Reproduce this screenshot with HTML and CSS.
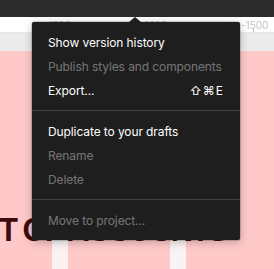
FILE: index.html
```html
<!DOCTYPE html>
<html>
<head>
<meta charset="utf-8">
<link rel="stylesheet" href="styles.css">
</head>
<body>
<div class="app">
  <div class="topbar"></div>
  <div class="ruler">
    <span class="rl rl1">-1700</span>
    <span class="rl rl2">-1600</span>
    <span class="rl rl3">-1500</span>
    <span class="tick"></span>
  </div>
  <div class="gray"></div>
  <div class="canvas">
    <div class="bar bar1"></div>
    <div class="bar bar2"></div>
    <div class="bigtext">T OF ACCOUNTS</div>
  </div>
  <div class="menu">
    <div class="caret"></div>
    <div class="item">Show version history</div>
    <div class="item dis">Publish styles and components</div>
    <div class="item"><span>Export...</span><span class="sc">⇧⌘E</span></div>
    <div class="sep"></div>
    <div class="item">Duplicate to your drafts</div>
    <div class="item dis">Rename</div>
    <div class="item dis">Delete</div>
    <div class="sep"></div>
    <div class="item dis">Move to project...</div>
  </div>
</div>
</body>
</html>
```

FILE: styles.css
```css
* { box-sizing: border-box; }
html, body { margin: 0; padding: 0; }
body { width: 274px; height: 269px; overflow: hidden; font-family: Inter, "Noto Sans", sans-serif; }
.app { position: relative; width: 274px; height: 269px; display: flex; flex-direction: column; background: #ffc9c9; }
.topbar { height: 17px; background: #2c2c2c; flex: none; }
.ruler { height: 16px; background: #fff; flex: none; position: relative; border-bottom: 1px solid #e6e6e6; }
.rl { position: absolute; top: 2px; font-size: 10px; color: #c4c4c4; }
.rl1 { left: 44px; }
.rl2 { left: 140px; }
.rl3 { left: 241px; }
.tick { position: absolute; left: 253px; bottom: 0; width: 1px; height: 3px; background: #bbb; }
.gray { height: 18px; background: #ebebeb; flex: none; }
.canvas { flex: 1; position: relative; background: #ffc9c9; overflow: hidden; }
.bar { position: absolute; width: 16px; bottom: 0; background: #fbf3f3; }
.bar1 { left: 52px; top: 185px; }
.bar2 { left: 170px; top: 185px; }
.bigtext { position: absolute; left: -1px; top: 161px; font-family: "Liberation Sans", Arial, sans-serif; font-weight: 700; font-size: 31px; letter-spacing: -2px; transform: scaleY(1.05); color: #3d0b0e; white-space: nowrap; }
.menu { position: absolute; left: 32px; top: 22px; width: 208px; background: #1e1e1e; border-radius: 2px; padding: 8px 0; box-shadow: 0 2px 10px rgba(0,0,0,0.25), 0 0 0 0.5px rgba(0,0,0,0.3); }
.caret { position: absolute; left: 97px; top: -5px; width: 0; height: 0; border-left: 6px solid transparent; border-right: 6px solid transparent; border-bottom: 5px solid #1e1e1e; }
.item { height: 24px; display: flex; align-items: center; justify-content: space-between; padding: 0 16px; font-size: 12px; color: #fff; white-space: nowrap; letter-spacing: -0.1px; }
.item.dis { color: rgba(255,255,255,0.4); }
.sc { letter-spacing: 1px; }
.sep { height: 1px; background: #444; margin: 8px 0 8px; }
```
